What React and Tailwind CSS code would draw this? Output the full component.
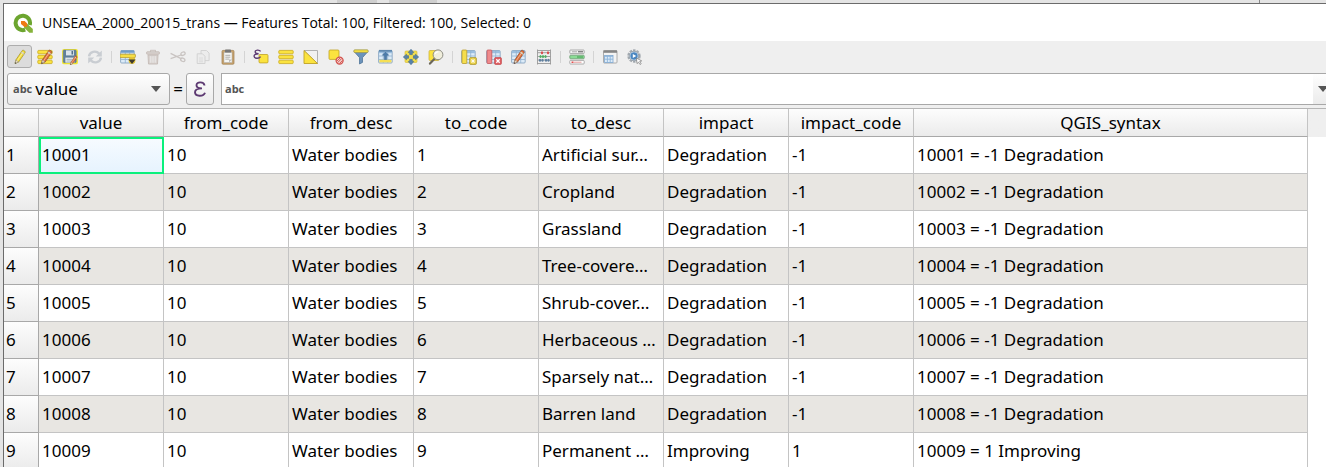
const Svg = ({ children, className = '' }) => (
  <svg viewBox="0 0 16 16" className={`h-4 w-4 ${className}`} aria-hidden="true">{children}</svg>
);

const Pencil = ({ body = '#f4dd3c', edge = '#a08f28' }) => (
  <>
    <path d="M3 14.6 3.8 11 10.2 1.6q.7-.8 1.6-.2l1 .8q.8.7.2 1.6L6.6 13z" fill={body} stroke={edge} strokeWidth=".7" />
    <path d="M9.4 3 12.200 5.200" stroke="#c9c9b4" strokeWidth="1.4" />
    <path d="M5 12 11.200 3" stroke="#fff" strokeOpacity=".5" strokeWidth=".9" />
    <path d="M3 14.6 3.8 11 6.6 13z" fill="#e6d9c0" stroke="#777" strokeWidth=".4" />
    <path d="M3 14.8 3.3 13.2 4.4 14z" fill="#333" />
  </>
);
const RedPencil = () => <Pencil body="#e2713a" edge="#8f4a2c" />;
const SmallPencil = () => <g transform="translate(6.4 6) scale(.66)"><RedPencil /></g>;
const Sheet = () => (
  <>
    <rect x=".6" y="1.5" width="13.6" height="12.5" rx="1" fill="#dcebf8" stroke="#7d9dbb" strokeWidth=".8" />
    <path d="M1 3h13" stroke="#9cbfe0" strokeWidth="2.4" />
    <path d="M1 7h13M1 10.5h13M5.3 2v12M9.7 2v12" stroke="#8fb1d1" strokeWidth=".8" />
  </>
);
const Bars = () => (
  <g fill="#fbe33f" stroke="#c9a91e" strokeWidth=".8">
    <rect x=".8" y="1.4" width="14.4" height="3.4" rx=".8" />
    <rect x=".8" y="6.3" width="14.4" height="3.4" rx=".8" />
    <rect x=".8" y="11.2" width="14.4" height="3.4" rx=".8" />
  </g>
);

const icons = {
  edit: <Pencil />,
  multi: <><Bars /><g transform="translate(1.500 0)"><RedPencil /></g></>,
  save: (
    <>
      <rect x="1" y="1" width="14" height="13.4" rx="1" fill="#5f7f9c" stroke="#f2e52e" strokeWidth="1.8" />
      <rect x="1.200" y="1" width="13" height="12.600" rx="1" fill="#5f7f9c" stroke="#617b91" strokeWidth=".5" />
      <rect x="4" y="1.4" width="8" height="5" fill="#dbe5ec" /><rect x="9.5" y="2" width="1.6" height="3.5" fill="#52708a" />
      <rect x="3.4" y="8.6" width="9" height="5" fill="#e9eef2" /><path d="M4.5 10.3h6M4.5 12h5" stroke="#8ea1b0" strokeWidth=".8" />
      <SmallPencil />
    </>
  ),
  reload: (
    <g fill="none" stroke="#c9cdd2" strokeWidth="2.4">
      <path d="M2 7.4C2.6 2.6 8.8 1 12.2 4.6M14 8.6c-.6 4.8-6.8 6.4-10.2 2.8" />
      <path d="M14.8 1.4v6h-6zM1.2 14.6v-6h6z" fill="#c9cdd2" stroke="none" />
    </g>
  ),
  addFeature: (
    <>
      <Sheet /><path d="M1 2.400h13.200" stroke="#6f9cc8" strokeWidth="2" />
      <rect x="0" y="5.2" width="15.4" height="3.4" rx=".8" fill="#f6de45" stroke="#b79a2b" strokeWidth=".8" />
      <circle cx="12" cy="11.500" r="3.400" fill="#e5c535" />
      <path d="M8.500 10.500h7l-3.500 4.600z" fill="#3d3a2e" />
    </>
  ),
  trash: (
    <g fill="#d8d2cf" stroke="#c4bab6" strokeWidth=".9">
      <path d="M5.5 3V1.3h5V3" fill="none" /><rect x="1.6" y="2.8" width="12.8" height="2.4" rx=".6" />
      <path d="M3 6h10l-.5 9h-9z" /><path d="M5.8 7.2v6.5M8 7.2v6.5M10.2 7.2v6.5" stroke="#eee" />
    </g>
  ),
  cut: (
    <g fill="none" stroke="#c9c4c2" strokeWidth="1.3">
      <path d="M.6 4.4 11 9.6M.6 9.6 11 6" /><ellipse cx="13" cy="4.7" rx="2.2" ry="1.6" transform="rotate(-25 13 4.7)" />
      <ellipse cx="12.8" cy="10.8" rx="2.2" ry="1.6" transform="rotate(25 12.8 10.8)" />
    </g>
  ),
  copy: (
    <g fill="#ececec" stroke="#d0d0d0" strokeWidth=".9">
      <path d="M6 1.5h5.5l2.6 2.6v7.5H6z" /><path d="M2.2 4.8h5.3L10 7.3v7.2H2.2z" />
      <path d="M4 9h4M4 11h4M4 12.8h4" stroke="#dadada" />
    </g>
  ),
  paste: (
    <>
      <rect x="2" y="1.4" width="12" height="13.8" rx="1" fill="#c8a571" stroke="#9d7d4d" strokeWidth=".7" />
      <rect x="4" y="3.2" width="8" height="10.4" fill="#f5f5f2" stroke="#999" strokeWidth=".4" />
      <rect x="5" y=".6" width="6" height="3" rx=".7" fill="#777" />
      <path d="M5.3 6.3h5M5.3 8.2h5M5.3 10.1h4" stroke="#9a9a9a" strokeWidth=".8" />
      <path d="M9 13.5v-3h3z" fill="#bbb" />
    </>
  ),
  selExpr: (
    <>
      <rect x="6" y="5.500" width="9" height="8.4" rx="1" fill="#fbe33f" stroke="#c0a225" strokeWidth=".8" />
      <path d="M7.600 2.400C6.200.4 2 .8 2.200 3c.1 1.600 1.800 1.800 3.400 1.800C3 4.800 1 5.400 1.100 7.200 1.200 9.800 6 9.800 7.600 7.600" fill="none" stroke="#5d3a72" strokeWidth="1.400" />
    </>
  ),
  selAll: <Bars />,
  invert: (
    <>
      <path d="M1 1.500h13.500V14.500z" fill="#f1f1f1" stroke="#a9a9a9" strokeWidth=".9" />
      <path d="M1 1.500v13h13.500z" fill="#fbe33f" stroke="#c0a225" strokeWidth=".9" />
    </>
  ),
  deselect: (
    <>
      <rect x="1" y="1" width="10" height="9.400" rx="1" fill="#fbe33f" stroke="#c0a225" strokeWidth=".8" />
      <circle cx="11.600" cy="11.600" r="3.500" fill="#f3c9c6" stroke="#d2524d" strokeWidth="1.300" />
      <path d="m9.500 13.700 4.200-4.200M9 12l3-3M11.500 14.500l3-3" stroke="#d2524d" strokeWidth=".9" />
    </>
  ),
  filter: (
    <>
      <path d="M1 2.500 6.500 8.600V15l3-1.600V8.600L15 2.500z" fill="#6b93bb" stroke="#456b91" strokeWidth=".7" />
      <rect x=".8" y=".8" width="14.400" height="2.700" rx="1" fill="#f3dd3f" stroke="#9c9750" strokeWidth=".7" />
    </>
  ),
  moveTop: (
    <>
      <Sheet /><rect x="1.400" y="10.800" width="12" height="2.600" fill="#f6df54" />
      <path d="M1 1.800h13" stroke="#5f88ae" strokeWidth="1.800" />
      <path d="M7.500 3 10.600 6.200H8.600V10.500H6.400V6.200H4.400z" fill="#4c7cab" stroke="#37658f" strokeWidth=".5" />
    </>
  ),
  pan: (
    <>
      <rect x="2" y="2" width="12" height="11.500" rx="1" fill="#f5e04c" stroke="#d0b63a" strokeWidth=".6" />
      <path d="M8 .3 10.800 3.600H9.300v2h-2.600v-2H5.200zM8 15.700 5.200 12.400h1.500v-2h2.600v2h1.500zM.3 8 3.600 5.200v1.500h2v2.600h-2v1.500zM15.700 8l-3.300 2.800V9.300h-2V6.700h2V5.200z" fill="#5983ad" stroke="#3f6991" strokeWidth=".6" />
    </>
  ),
  zoomSel: (
    <>
      <rect x="1" y="1.500" width="10" height="10" rx="1" fill="#fbe33f" stroke="#c9ae35" strokeWidth=".7" />
      <path d="M6.800 9.400 2 14.600" stroke="#6b6658" strokeWidth="2.200" strokeLinecap="round" />
      <circle cx="10" cy="5.800" r="4.900" fill="#f0eedc" stroke="#8d8d84" strokeWidth="1" />
      <path d="M7 5c.5-1.600 2-2.300 3.500-2" fill="none" stroke="#fff" strokeWidth="1.200" />
    </>
  ),
  newField: (
    <>
      <Sheet /><rect x="1" y="1" width="4.800" height="13.500" rx=".8" fill="#f5de4d" stroke="#bca02e" strokeWidth=".8" />
      <rect x="8.600" y="8.600" width="6.800" height="6.800" rx="1" fill="#e9cf3d" stroke="#9f8a24" strokeWidth=".7" />
      <path d="M12 9.600v4.800M9.600 12h4.800M10.300 10.300l3.400 3.400M13.700 10.300l-3.400 3.400" stroke="#fff" strokeWidth=".8" />
    </>
  ),
  delField: (
    <>
      <Sheet /><rect x="1" y="1" width="4.800" height="13.500" rx=".8" fill="#ef8a8c" stroke="#c65b5f" strokeWidth=".8" />
      <rect x="8.600" y="8.600" width="6.800" height="6.800" rx="1" fill="#df5e62" stroke="#c14347" strokeWidth=".7" />
      <path d="m10.300 10.300 3.400 3.400M13.700 10.300l-3.400 3.400" stroke="#fff" strokeWidth="1.300" />
    </>
  ),
  organize: <><Sheet /><RedPencil /></>,
  calc: (
    <>
      <path d="M1.500.5v15M14.500.5v15M1.500 1.500h13M1.500 3.700h13M1.500 7.500h13M1.500 11h13M1 14.500h14" stroke="#999" strokeWidth=".9" />
      <g fill="#d94a4a"><ellipse cx="6" cy="3.700" rx="1.100" ry="1.500" /><ellipse cx="12" cy="3.700" rx="1.100" ry="1.500" /></g>
      <g fill="#4fae62"><ellipse cx="4.500" cy="7.500" rx="1.100" ry="1.500" /><ellipse cx="7" cy="7.500" rx="1.100" ry="1.500" /><ellipse cx="9.500" cy="7.500" rx="1.100" ry="1.500" /></g>
      <g fill="#5e7f9f"><ellipse cx="4" cy="11.200" rx="1.100" ry="1.500" /><ellipse cx="6.500" cy="11.200" rx="1.100" ry="1.500" /><ellipse cx="10" cy="11.200" rx="1.100" ry="1.500" /><ellipse cx="12.500" cy="11.200" rx="1.100" ry="1.500" /></g>
    </>
  ),
  conditional: (
    <>
      <rect x=".8" y="1" width="14.400" height="3.600" rx=".8" fill="#f2f2f2" stroke="#999" strokeWidth=".8" />
      <path d="M3 2.800h5" stroke="#aaa" /><path d="M9 2.800h5" stroke="#555" />
      <rect x=".8" y="6.200" width="14.400" height="3.600" rx=".8" fill="#8bdc95" stroke="#6d9b73" strokeWidth=".8" />
      <path d="M8 8h6" stroke="#3e9a4c" />
      <rect x=".8" y="11.400" width="14.400" height="3.600" rx=".8" fill="#fff" stroke="#999" strokeWidth=".8" />
      <path d="M2.500 13.200h2" stroke="#e03c3c" strokeWidth="1.400" /><path d="M4.500 13.200h8" stroke="#e59a9a" />
    </>
  ),
  dock: (
    <>
      <rect x="1.500" y="1.500" width="13.500" height="12.500" rx=".8" fill="#f3f3f3" stroke="#9b9b9b" strokeWidth=".8" />
      <path d="M1.500 2.600h13.500" stroke="#858585" strokeWidth="2.400" />
      <rect x="2.600" y="6.500" width="8.400" height="7" fill="#dcebf8" stroke="#7da6cf" strokeWidth=".8" />
      <path d="M2.600 7.400h8.400M2.600 10.200h8.400M5.400 7v6.500M8.200 7v6.500" stroke="#8db4da" strokeWidth=".9" />
    </>
  ),
  actions: (
    <>
      <circle cx="7" cy="7" r="5.700" fill="none" stroke="#a4aab0" strokeWidth="2" strokeDasharray="2.500 1.100" />
      <circle cx="7" cy="7" r="4.800" fill="#e4edf5" stroke="#7f8d9a" strokeWidth=".8" />
      <circle cx="7" cy="7" r="3.700" fill="#4a86c0" /><path d="M5.800 5 9.200 7 5.800 9z" fill="#fff" />
      <path d="m9.400 9 .6 5.600 1.500-1.400 1.500 2.300 1.200-.8-1.500-2.200 2-.6z" fill="#fff" stroke="#777" strokeWidth=".7" />
    </>
  ),
};

const groups = [
  [['edit', 'Toggle editing mode'], ['multi', 'Toggle multi edit mode'], ['save', 'Save edits'], ['reload', 'Reload the table', true]],
  [['addFeature', 'Add feature'], ['trash', 'Delete selected features', true], ['cut', 'Cut', true], ['copy', 'Copy', true], ['paste', 'Paste']],
  [['selExpr', 'Select by expression'], ['selAll', 'Select all'], ['invert', 'Invert selection'], ['deselect', 'Deselect all'], ['filter', 'Filter'], ['moveTop', 'Move selection to top'], ['pan', 'Pan map to selection'], ['zoomSel', 'Zoom map to selection']],
  [['newField', 'New field'], ['delField', 'Delete field'], ['organize', 'Organize columns'], ['calc', 'Field calculator']],
  [['conditional', 'Conditional formatting']],
  [['dock', 'Dock attribute table'], ['actions', 'Actions']],
];

const columns = ['value', 'from_code', 'from_desc', 'to_code', 'to_desc', 'impact', 'impact_code', 'QGIS_syntax'];
const classes = ['Artificial sur…', 'Cropland', 'Grassland', 'Tree-covere…', 'Shrub-cover…', 'Herbaceous …', 'Sparsely nat…', 'Barren land', 'Permanent …'];
const rows = classes.map((name, i) => {
  const value = 10001 + i;
  const impact = i === 8 ? 'Improving' : 'Degradation';
  const code = i === 8 ? '1' : '-1';
  return [value, 10, 'Water bodies', i + 1, name, impact, code, `${value} = ${code} ${impact}`];
});

const Arrow = () => (
  <svg viewBox="0 0 10 6" className="h-1.5 w-2.5 shrink-0" aria-hidden="true"><path d="M0 0h10L5 6z" fill="#555" /></svg>
);

const Logo = () => (
  <svg viewBox="0 0 20 20" className="h-5 w-5" aria-hidden="true">
    <path d="M12.200 16.700A7.200 7.200 0 1 1 16.700 12" fill="none" stroke="#6ca52f" strokeWidth="4" />
    <path d="M11 11h3.500l5.300 5v3.700h-3.500L11 14.500z" fill="#86b33b" />
    <path d="M8 8h3.600l2.600 2.500v3.300h-3L8 11z" fill="#ee7913" />
  </svg>
);

export default function App() {
  return (
    <div className="flex h-screen flex-col overflow-hidden bg-[#e4e4e4] pl-[3px] font-['Noto_Sans',sans-serif] text-black">
      <div className="flex h-[3px] shrink-0">
        <div className="flex w-[1257px] border-r border-[#888] pl-[334px]">
          <span className="w-10 bg-[#cfcfcf]" />
          <span className="w-3" />
          <span className="w-12 bg-[#cfcfcf]" />
        </div>
      </div>
      <main className="flex min-h-0 flex-1 flex-col border-l border-t border-[#6b6b6b] bg-[#efefef]">
        <header className="flex h-[37px] shrink-0 items-center gap-[9px] bg-white pl-[9px]">
          <Logo />
          <h1 className="whitespace-nowrap font-['Open_Sans','Noto_Sans',sans-serif] text-[14px]">
            UNSEAA_2000_20015_trans — Features Total: 100, Filtered: 100, Selected: 0
          </h1>
        </header>

        <div role="toolbar" aria-label="Attribute table" className="mb-px flex h-[31px] shrink-0 items-center pl-[3px]">
          {groups.map((group, g) => (
            <div key={g} className="flex items-center">
              {g > 0 && <span className="flex w-2 justify-center"><span className="h-3 w-px bg-[#d4d4d4]" /></span>}
              {group.map(([id, label, disabled]) => (
                <button
                  key={id}
                  type="button"
                  aria-label={label}
                  disabled={disabled}
                  className={`flex h-[23px] w-[25px] items-center justify-center rounded-[3px] border ${id === 'edit' ? 'border-[#adadad] bg-[#dcdcdc]' : 'border-transparent'}`}
                >
                  <Svg>{icons[id]}</Svg>
                </button>
              ))}
            </div>
          ))}
        </div>

        <form className="-mr-2 flex h-8 shrink-0 items-stretch pl-[3px]">
          <label className="relative flex w-[163px] items-center rounded-[3px] border border-[#a8a8a8] bg-linear-to-b from-[#fefefe] to-[#ebebeb] pl-[5px] pr-2">
            <span className="font-['Open_Sans',sans-serif] text-[11px] leading-4 font-bold text-[#555]">abc</span>
            <select aria-label="Field" className="ml-[3px] min-w-0 flex-1 appearance-none bg-transparent text-[17px] leading-6 outline-none">
              <option>value</option>
            </select>
            <Arrow />
          </label>
          <span className="flex w-4 items-center justify-center text-[17px]">=</span>
          <button type="button" aria-label="Expression" className="flex w-7 items-center justify-center rounded-[3px] border border-[#a8a8a8] bg-linear-to-b from-[#fefefe] to-[#ebebeb]">
            <svg viewBox="0 0 14 16" className="h-4 w-3.5" aria-hidden="true">
              <path d="M11.500 4.500C11 .6 3.500.3 3.500 4.200c0 2.600 2.500 3.200 5.500 3.200C5 7.400 2 8.600 2 11.300c0 4.400 8.500 4.600 10 .4" fill="none" stroke="#5d3a72" strokeWidth="1.900" />
            </svg>
          </button>
          <div className="ml-[7px] flex min-w-0 flex-1 items-stretch border border-[#a8a8a8] bg-white pl-[3px]">
            <label htmlFor="expression" className="self-center font-['Open_Sans',sans-serif] text-[11px] leading-4 font-bold text-[#555]">abc</label>
            <input id="expression" type="text" className="min-w-0 flex-1 bg-transparent px-1 text-[17px] outline-none" />
            <button type="button" aria-label="Recent expressions" className="flex w-5 items-center justify-center bg-linear-to-b from-[#fefefe] to-[#ebebeb]">
              <Arrow />
            </button>
          </div>
        </form>

        <div className="mt-[3px] min-h-0 flex-1 overflow-hidden border-t border-[#b5b5b5] bg-white">
          <div className="bg-linear-to-b from-[#efefef] from-[28px] to-white to-[28px]">
            <table className="w-[1304px] table-fixed border-separate border-spacing-0 text-[17px]">
              <colgroup>
                <col className="w-[35px]" />
                {columns.map((c, i) => <col key={c} className={i === 7 ? 'w-[394px]' : 'w-[125px]'} />)}
              </colgroup>
              <thead>
                <tr className="h-7">
                  <td className="border-b border-r border-b-[#a8a8a8] border-r-[#c4c4c4] bg-linear-to-b from-[#fdfdfd] to-[#ebebeb] p-0" />
                  {columns.map((c) => (
                    <th key={c} scope="col" className="border-b border-r border-b-[#a8a8a8] border-r-[#c4c4c4] bg-linear-to-b from-[#fdfdfd] to-[#ebebeb] p-0 leading-6 font-normal">{c}</th>
                  ))}
                </tr>
              </thead>
              <tbody>
                {rows.map((row, r) => (
                  <tr key={r} className={`h-[37px] ${r % 2 ? 'bg-[#e8e6e2]' : 'bg-white'}`}>
                    <th scope="row" className="border-b border-r border-[#a8a8a8] bg-linear-to-b from-[#fdfdfd] to-[#ebebeb] p-0 pl-0.5 text-left font-normal">{r + 1}</th>
                    {row.map((cell, i) => (
                      <td
                        key={i}
                        className={`whitespace-nowrap p-0 pl-[3px] ${r === 0 && i === 0 ? 'bg-linear-to-b from-[#f7fbff] to-[#e6f3fe] outline-2 -outline-offset-2 outline-[#0af07c]' : ''} border-b border-r border-[#c4c4c4]`}
                      >
                        {cell}
                      </td>
                    ))}
                  </tr>
                ))}
              </tbody>
            </table>
          </div>
        </div>
      </main>
    </div>
  );
}
